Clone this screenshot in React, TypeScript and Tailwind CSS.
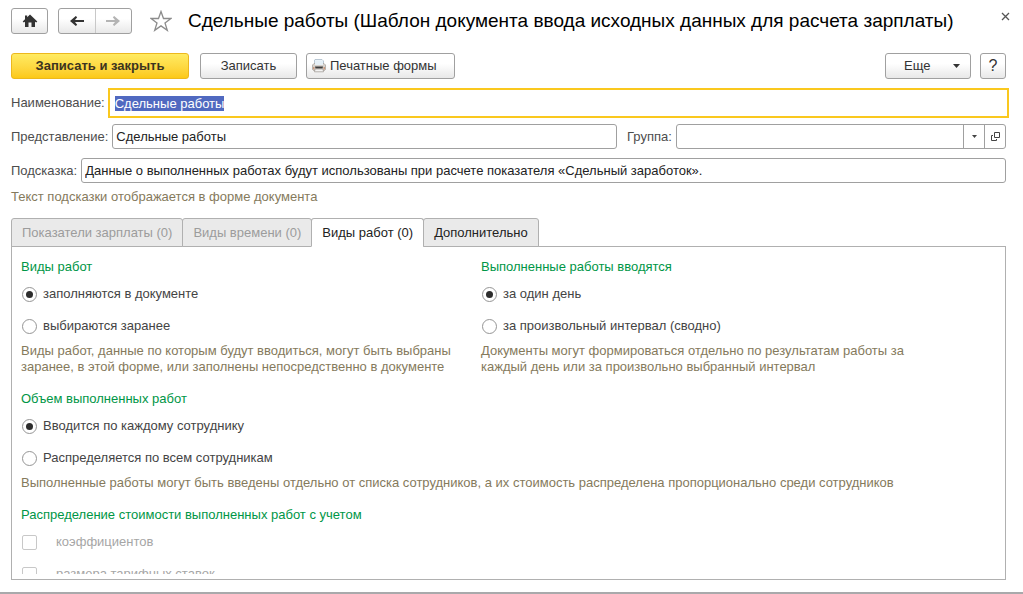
import { useEffect, useRef, useState } from 'react';
import type { ReactNode } from 'react';
import clsx from 'clsx';

const grayButton =
  'h-[26px] rounded-[3px] border border-[#a0a0a0] bg-linear-to-b from-white from-40% to-[#e8e8e8] text-[#333]';
const field = 'h-[25px] min-w-0 flex-1 rounded-[3px] border border-[#a0a0a0] bg-white px-[3px] text-[#222] outline-none';

const tabs = [
  { id: 'indicators', title: 'Показатели зарплаты (0)', disabled: true },
  { id: 'time', title: 'Виды времени (0)', disabled: true },
  { id: 'works', title: 'Виды работ (0)', disabled: false },
  { id: 'extra', title: 'Дополнительно', disabled: false },
];

function HomeIcon() {
  return (
    <svg width="16" height="14" viewBox="0 0 16 14" fill="#333" aria-hidden="true">
      <path d="M8 0.6 L15.3 7.4 L14.2 8.6 L13 7.8 V13 H9.5 V8.5 H6.5 V13 H3 V7.8 L1.8 8.6 L0.7 7.4 L3 5.2 V1.5 H5.2 V3.2 Z" />
    </svg>
  );
}

function ArrowIcon({ forward = false }: { forward?: boolean }) {
  return (
    <svg width="16" height="12" viewBox="0 0 16 12" fill={forward ? '#b4b4b4' : '#333'} aria-hidden="true">
      {forward ? (
        <path d="M1 5 H10 L7.8 2.3 L9.2 1 L15 6 L9.2 11 L7.8 9.7 L10 7 H1 Z" />
      ) : (
        <path d="M15 5 H6 L8.2 2.3 L6.8 1 L1 6 L6.8 11 L8.2 9.7 L6 7 H15 Z" />
      )}
    </svg>
  );
}

function StarIcon() {
  return (
    <svg width="22" height="22" viewBox="0 0 22 22" fill="none" stroke="#8c8c8c" strokeWidth="1.3" aria-hidden="true">
      <path d="M11 1.5 L13.5 8.5 H21 L15 13 L17.3 20.3 L11 15.9 L4.7 20.3 L7 13 L1 8.5 H8.5 Z" />
    </svg>
  );
}

function PrinterIcon() {
  return (
    <svg width="14" height="14" viewBox="0 0 14 14" aria-hidden="true">
      <path d="M3 0.5 H10 L11.5 2 V6 H2.5 V1 Z" fill="#eef5fb" stroke="#a9bac8" strokeWidth="0.8" />
      <path d="M2 4.5 H12 L13.5 6 V10.5 L12.5 11.5 H1.5 L0.5 10.5 V6 Z" fill="#d6d1cc" stroke="#aaa49e" strokeWidth="0.8" />
      <path d="M3 1.5 H11 V6 H3 Z" fill="#e6f0f7" />
      <path d="M3 7.5 H11 L10.5 9.5 H3.5 Z" fill="#3c3c3c" />
      <path d="M1 8 H2.5 V10.5 H1 Z M11.5 8 H13 V10.5 H11.5 Z" fill="#c99a80" />
      <path d="M3 10 H11 L11.5 12.8 H2.5 Z" fill="#f4f4f4" stroke="#98928c" strokeWidth="0.7" />
    </svg>
  );
}

function OpenIcon() {
  return (
    <svg width="9" height="9" viewBox="0 0 9 9" fill="none" stroke="#444" aria-hidden="true">
      <path d="M3.5 0.5 H8.5 V5.5 H3.5 Z M2 3.5 H0.5 V8.5 H5.5 V7" />
    </svg>
  );
}

function Choice({ name, options }: { name: string; options: string[] }) {
  const [value, setValue] = useState(0);

  return (
    <div className="mt-[3px] mb-px">
      {options.map((option, i) => (
        <label key={option} className="flex h-8 items-center gap-1.5 text-[#444]">
          <input
            type="radio"
            name={name}
            checked={value === i}
            onChange={() => setValue(i)}
            className="ml-px grid size-[15px] appearance-none place-items-center rounded-full border border-[#959595] bg-white before:size-[7px] before:rounded-full checked:before:bg-[#2d2d2d]"
          />
          {option}
        </label>
      ))}
    </div>
  );
}

function Legend({ children }: { children: ReactNode }) {
  return <legend className="text-[#009646]">{children}</legend>;
}

function Hint({ children }: { children: ReactNode }) {
  return <p className="text-[#857a5c]">{children}</p>;
}

export default function App() {
  const [active, setActive] = useState('works');
  const nameRef = useRef<HTMLInputElement>(null);

  useEffect(() => {
    nameRef.current?.focus();
    nameRef.current?.select();
  }, []);

  return (
    <div className="flex h-screen flex-col border-b-2 border-[#a9a9ab] bg-white font-['Liberation_Sans',Arial,sans-serif] text-[13px] leading-4 text-[#4d4d4d]">
      <main className="flex min-h-0 flex-1 flex-col pt-2 pr-[17px] pb-3 pl-[11px]">
        <header className="flex items-center">
          <button type="button" aria-label="Домой" className={clsx(grayButton, 'grid w-[37px] place-items-center')}>
            <HomeIcon />
          </button>
          <div className={clsx(grayButton, 'ml-2.5 flex w-[74px]')}>
            <button type="button" aria-label="Назад" className="grid flex-1 place-items-center border-r border-[#c8c8c8]">
              <ArrowIcon />
            </button>
            <button type="button" aria-label="Вперед" className="grid flex-1 place-items-center">
              <ArrowIcon forward />
            </button>
          </div>
          <button type="button" aria-label="В избранное" className="ml-[18px]">
            <StarIcon />
          </button>
          <h1 className="ml-4 flex-1 truncate text-[19px] leading-6 text-black">
            Сдельные работы (Шаблон документа ввода исходных данных для расчета зарплаты)
          </h1>
          <button type="button" aria-label="Закрыть" className="-mr-2 self-start p-1">
            <svg width="9" height="9" viewBox="0 0 9 9" stroke="#555" strokeWidth="1.3" aria-hidden="true">
              <path d="M1 1 L8 8 M8 1 L1 8" />
            </svg>
          </button>
        </header>

        <div className="mt-[19px] flex">
          <button
            type="button"
            className="h-[26px] w-[178px] rounded-[3px] border border-[#edb81d] bg-linear-to-b from-[#ffeb61] to-[#fcc914] font-bold text-[#3c3420]"
          >
            Записать и закрыть
          </button>
          <button type="button" className={clsx(grayButton, 'ml-[11px] w-[97px]')}>
            Записать
          </button>
          <button type="button" className={clsx(grayButton, 'ml-[9px] flex w-[149px] items-center gap-1 pl-[5px]')}>
            <PrinterIcon />
            Печатные формы
          </button>
          <button type="button" className={clsx(grayButton, 'ml-auto flex w-[86px] items-center justify-between pr-2.5 pl-[18px]')}>
            Еще
            <svg width="7" height="4" viewBox="0 0 7 4" fill="#333" aria-hidden="true">
              <path d="M0 0 H7 L3.5 4 Z" />
            </svg>
          </button>
          <button type="button" aria-label="Справка" className={clsx(grayButton, 'ml-[9px] w-[26px] text-base')}>
            ?
          </button>
        </div>

        <div className="mt-3 flex items-center gap-1.5">
          <label htmlFor="name">Наименование:</label>
          <input
            id="name"
            ref={nameRef}
            defaultValue="Сдельные работы"
            className="h-6 min-w-0 flex-1 bg-white px-1 text-[#222] outline-2 outline-offset-1 outline-[#fac81e] selection:bg-[#5069c0] selection:text-white"
          />
        </div>

        <div className="mt-[9px] flex items-center gap-1">
          <label htmlFor="view">Представление:</label>
          <input id="view" defaultValue="Сдельные работы" className={field} />
          <div className="ml-1.5 flex w-[379px] items-center gap-1">
            <label htmlFor="group">Группа:</label>
            <div className="flex h-[25px] min-w-0 flex-1 rounded-[3px] border border-[#a0a0a0]">
              <input id="group" className="min-w-0 flex-1 px-[3px] outline-none" />
              <button type="button" aria-label="Выбрать" className="grid w-[21px] place-items-center border-l border-[#a0a0a0]">
                <svg width="5" height="3" viewBox="0 0 5 3" fill="#444" aria-hidden="true">
                  <path d="M0 0 H5 L2.5 3 Z" />
                </svg>
              </button>
              <button type="button" aria-label="Открыть" className="grid w-[21px] place-items-center border-l border-[#a0a0a0]">
                <OpenIcon />
              </button>
            </div>
          </div>
        </div>

        <div className="mt-[9px] flex items-center gap-1">
          <label htmlFor="tip">Подсказка:</label>
          <input
            id="tip"
            defaultValue="Данные о выполненных работах будут использованы при расчете показателя «Сдельный заработок»."
            className={field}
          />
        </div>
        <div className="mt-1.5">
          <Hint>Текст подсказки отображается в форме документа</Hint>
        </div>

        <div role="tablist" className="mt-[13px] flex">
          {tabs.map((tab) => (
            <button
              key={tab.id}
              type="button"
              role="tab"
              aria-selected={active === tab.id}
              disabled={tab.disabled}
              onClick={() => setActive(tab.id)}
              className={clsx(
                'relative -mb-px h-[29px] rounded-t-[3px] border border-[#b0b0b0] px-2.5 not-first:-ml-px',
                active === tab.id ? 'border-b-white bg-white' : 'bg-[#eaeaea]',
                tab.disabled ? 'text-[#9c9c9c]' : 'text-[#222]',
              )}
            >
              {tab.title}
            </button>
          ))}
        </div>

        <section role="tabpanel" className="flex min-h-0 flex-1 flex-col border border-[#b0b0b0] px-[9px] pt-3 pb-[5px]">
          <div className="min-h-0 flex-1 overflow-hidden">
            <div className="flex">
              <fieldset className="w-[460px] pr-6">
                <Legend>Виды работ</Legend>
                <Choice name="kinds" options={['заполняются в документе', 'выбираются заранее']} />
                <Hint>
                  Виды работ, данные по которым будут вводиться, могут быть выбраны заранее, в этой форме, или заполнены
                  непосредственно в документе
                </Hint>
              </fieldset>
              <fieldset className="w-[440px]">
                <Legend>Выполненные работы вводятся</Legend>
                <Choice name="period" options={['за один день', 'за произвольный интервал (сводно)']} />
                <Hint>
                  Документы могут формироваться отдельно по результатам работы за каждый день или за произвольно выбранный
                  интервал
                </Hint>
              </fieldset>
            </div>

            <fieldset className="mt-4">
              <Legend>Объем выполненных работ</Legend>
              <Choice name="volume" options={['Вводится по каждому сотруднику', 'Распределяется по всем сотрудникам']} />
              <Hint>
                Выполненные работы могут быть введены отдельно от списка сотрудников, а их стоимость распределена
                пропорционально среди сотрудников
              </Hint>
            </fieldset>

            <fieldset className="mt-4" disabled>
              <Legend>Распределение стоимости выполненных работ с учетом</Legend>
              <div className="mt-[3px]">
                {['коэффициентов', 'размера тарифных ставок'].map((item) => (
                  <label key={item} className="flex h-8 items-center gap-[19px] text-[#a6a6a6]">
                    <input type="checkbox" className="ml-px size-[15px] appearance-none rounded-[2px] border border-[#c8c8c8] bg-white" />
                    {item}
                  </label>
                ))}
              </div>
            </fieldset>
          </div>
        </section>
      </main>
    </div>
  );
}
